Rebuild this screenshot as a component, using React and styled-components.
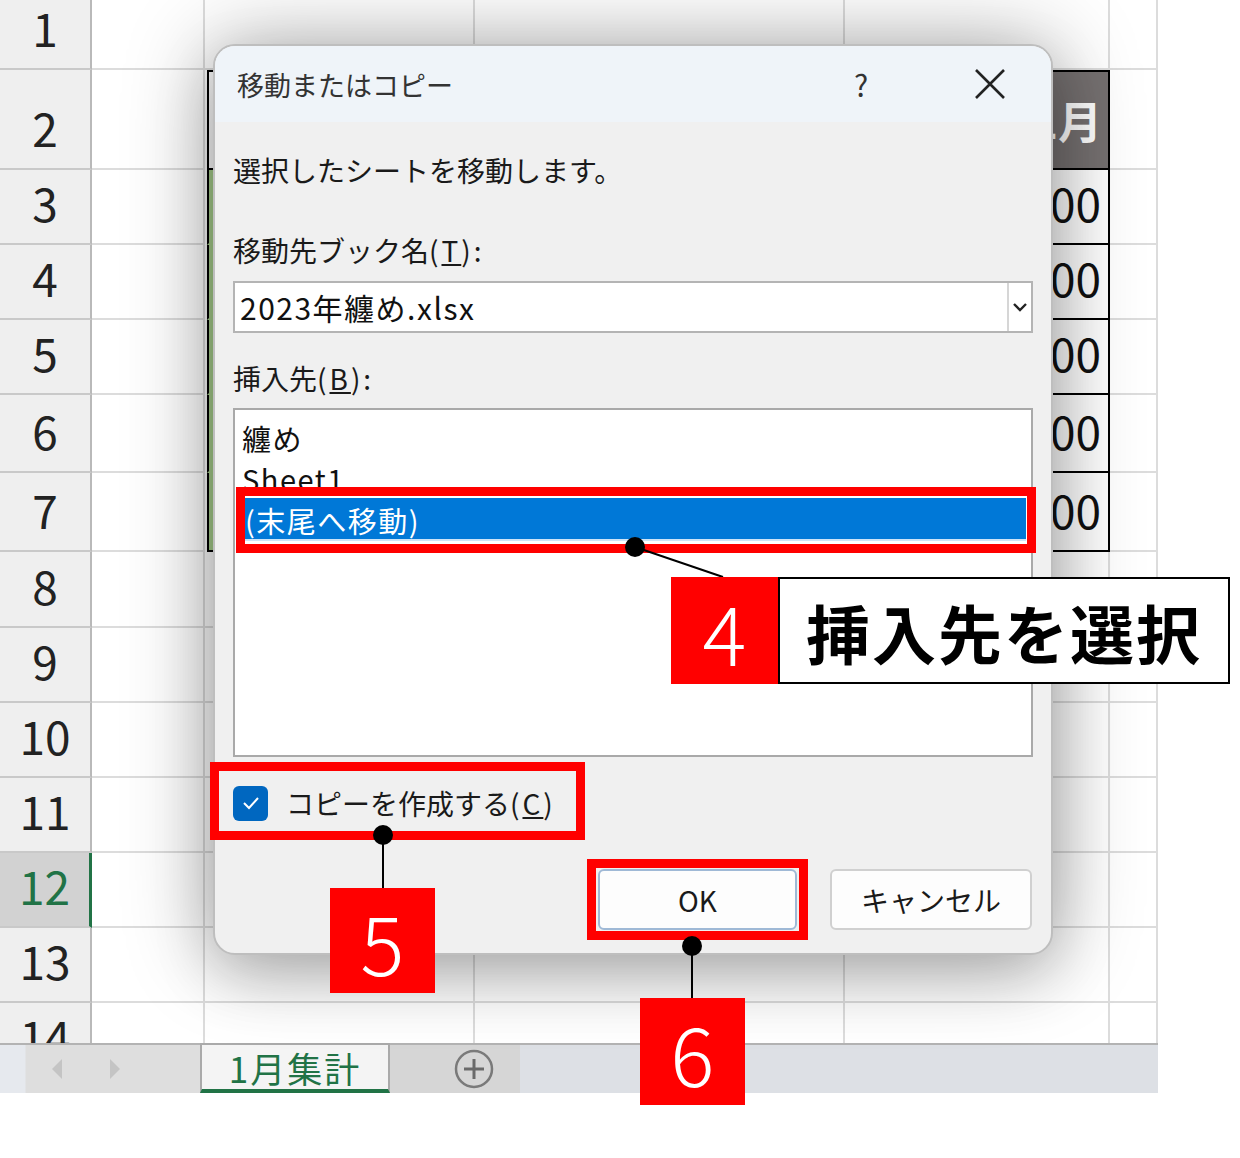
import React from 'react'
import styled, { createGlobalStyle } from 'styled-components'

const GlobalStyle = createGlobalStyle`
    html, body {
        margin:0;
        padding:0;
        background:#fff;
    }
    body {
        font-family:"Noto Sans CJK JP", "Noto Sans", sans-serif;
        color:#1a1a1a;
    }
    * {
        box-sizing:border-box;
    }
`

const FONT = `"Noto Sans CJK JP", "Noto Sans", sans-serif`

const Page = styled.div`
    position:relative;
    width:1240px;
    height:1158px;
    overflow:hidden;
    background:#fff;
`

const Workbook = styled.div`
    width:1158px;
    display:flex;
    flex-direction:column;
`

const Sheet = styled.div`
    height:1043px;
    overflow:hidden;
    display:grid;
    grid-template-columns:92px 113px 270px 370px 265px 48px;
    grid-template-rows:70px 100px 75px 75px 75px 78px 79px 76px 75px 75px 75px 75px 75px 75px;
    background:#fff;
`

const RowHead = styled.div`
    display:flex;
    align-items:flex-end;
    justify-content:center;
    padding-bottom:15px;
    font-family:${FONT};
    font-size:46px;
    line-height:1.1;
    background:${p => p.$active ? '#d2d2d2' : '#efefef'};
    color:${p => p.$active ? '#217346' : '#222'};
    border-right:${p => p.$active ? '3px solid #217346' : '2px solid #b9b9b9'};
    border-bottom:2px solid #c9c9c9;
`

const Cell = styled.div`
    border-right:2px solid #dcdcdc;
    border-bottom:2px solid #dcdcdc;
`

const HeadCell = styled.div`
    display:flex;
    align-items:center;
    justify-content:flex-end;
    padding-right:6px;
    background:#767171;
    color:#fff;
    font-family:${FONT};
    font-size:44px;
    font-weight:700;
    border-top:2px solid #000;
    border-right:2px solid #000;
    border-bottom:2px solid #000;
`

const TitleCell = styled.div`
    background:#fff;
    border-left:2px solid #000;
    border-top:2px solid #000;
    border-bottom:2px solid #000;
    margin-left:2px;
`

const BlankCell = styled.div`
    background:#fff;
    border-right:2px solid #000;
    border-bottom:2px solid #000;
`

const GreenCell = styled.div`
    background:#a9d08e;
    border-left:2px solid #000;
    margin-left:2px;
    border-bottom:2px solid ${p => p.$last ? '#000' : '#a9d08e'};
`

const NumCell = styled.div`
    display:flex;
    align-items:flex-end;
    justify-content:flex-end;
    padding:0 7px 15px 0;
    background:#fff;
    font-family:${FONT};
    font-size:46px;
    line-height:1.1;
    color:#111;
    border-right:2px solid #000;
    border-bottom:2px solid #000;
`

const TabBar = styled.div`
    height:50px;
    display:flex;
    background:#dde0e5;
    border-top:2px solid #b3b3b3;
`

const TabNav = styled.div`
    width:200px;
    display:flex;
    align-items:center;
    gap:44px;
    padding-left:50px;
    background:linear-gradient(90deg, #e6e9ee 0px, #e6e9ee 25px, #dedede 26px);
`

const Tab = styled.div`
    width:190px;
    display:flex;
    align-items:center;
    justify-content:center;
    margin-top:-2px;
    background:#f4f4f4;
    border-left:2px solid #aaa;
    border-right:2px solid #aaa;
    border-top:2px solid #aaa;
    border-bottom:4px solid #217346;
    color:#217346;
    font-family:${FONT};
    font-size:35px;
    letter-spacing:2px;
`

const AddSheet = styled.div`
    width:130px;
    display:flex;
    align-items:center;
    padding-left:63px;
    background:#d6d6d6;
`

const Dialog = styled.div`
    position:absolute;
    left:213px;
    top:44px;
    width:840px;
    height:911px;
    display:flex;
    flex-direction:column;
    background:#f0f0f0;
    border:2px solid #bebebe;
    border-radius:22px;
    box-shadow:0 0 90px rgba(0,0,0,0.32), 0 20px 60px rgba(0,0,0,0.18);
    overflow:hidden;
    font-family:${FONT};
`

const TitleBar = styled.div`
    height:76px;
    flex:none;
    display:flex;
    align-items:center;
    padding:0 31px 0 22px;
    background:#eff4f9;
`

const Title = styled.div`
    flex:1;
    font-size:27px;
    color:#333;
`

const Help = styled.div`
    width:40px;
    text-align:center;
    font-size:30px;
    color:#333;
`

const Close = styled.div`
    width:60px;
    margin-left:79px;
    display:flex;
    justify-content:center;
`

const Body = styled.div`
    flex:1;
    display:flex;
    flex-direction:column;
    padding:0 18px 0 18px;
`

const Text = styled.div`
    font-size:28px;
    line-height:40px;
    color:#1a1a1a;
    margin-top:${p => p.$gap}px;
`

const Key = styled.span`
    letter-spacing:3px;
`

const Combo = styled.div`
    margin-top:11px;
    height:52px;
    display:flex;
    background:#fff;
    border:2px solid #b4b4b4;
`

const ComboText = styled.div`
    flex:1;
    display:flex;
    align-items:center;
    padding-left:5px;
    font-size:30px;
    letter-spacing:1.5px;
    color:#111;
`

const ComboButton = styled.div`
    width:24px;
    display:flex;
    align-items:center;
    justify-content:center;
    border-left:2px solid #d6d6d6;
`

const List = styled.div`
    margin-top:10px;
    height:349px;
    display:flex;
    flex-direction:column;
    padding:8px 5px 0 5px;
    background:#fff;
    border:2px solid #a9a9a9;
`

const Item = styled.div`
    height:${p => p.$selected ? 43 : 40}px;
    display:flex;
    align-items:center;
    margin-left:${p => p.$selected ? 4 : 0}px;
    padding-left:${p => p.$selected ? 1 : 2}px;
    font-size:29px;
    letter-spacing:1.5px;
    color:${p => p.$selected ? '#fff' : '#111'};
    background:${p => p.$selected ? '#0078d7' : 'transparent'};
    box-shadow:${p => p.$selected ? 'inset 0 -2px 0 #cde4f8' : 'none'};
`

const CheckRow = styled.div`
    margin-top:28px;
    height:36px;
    display:flex;
    align-items:center;
    gap:18px;
    font-size:28px;
    color:#1a1a1a;
`

const CheckBox = styled.div`
    width:35px;
    height:35px;
    display:flex;
    align-items:center;
    justify-content:center;
    border-radius:6px;
    background:#0067c0;
`

const Buttons = styled.div`
    margin-top:48px;
    display:flex;
    justify-content:flex-end;
    gap:33px;
    padding-right:1px;
`

const Button = styled.div`
    width:${p => p.$w}px;
    height:61px;
    display:flex;
    align-items:center;
    justify-content:center;
    background:#fdfdfd;
    border:2px solid ${p => p.$primary ? '#9fb9d6' : '#d0d0d0'};
    border-radius:6px;
    font-size:28px;
    color:#1a1a1a;
`

const Mark = styled.div`
    position:absolute;
    left:${p => p.$x}px;
    top:${p => p.$y}px;
    width:${p => p.$w}px;
    height:${p => p.$h}px;
    border:9px solid #ff0000;
`

const Badge = styled.div`
    position:absolute;
    left:${p => p.$x}px;
    top:${p => p.$y}px;
    width:${p => p.$w}px;
    height:${p => p.$h}px;
    display:flex;
    align-items:center;
    justify-content:center;
    background:#ff0000;
    color:#fff;
    font-family:${FONT};
    font-size:82px;
    font-weight:300;
    line-height:1;
`

const Caption = styled.div`
    position:absolute;
    left:778px;
    top:577px;
    width:452px;
    height:107px;
    display:flex;
    align-items:center;
    justify-content:center;
    background:#fff;
    border:2px solid #000;
    font-family:${FONT};
    font-size:64px;
    font-weight:700;
    letter-spacing:2px;
    color:#000;
`

const Leaders = styled.svg`
    position:absolute;
    left:0;
    top:0;
    pointer-events:none;
`

const rows = [
    {n:1}, {n:2, kind:'head'}, {n:3, v:'120,000'}, {n:4, v:'150,000'},
    {n:5, v:'98,000'}, {n:6, v:'210,000'}, {n:7, v:'578,000'},
    {n:8}, {n:9}, {n:10}, {n:11}, {n:12, active:true}, {n:13}, {n:14},
]

function SheetRow({row}) {
    if (row.kind === 'head') {
        return (
            <>
                <RowHead>{row.n}</RowHead>
                <Cell />
                <TitleCell />
                <BlankCell />
                <HeadCell>1月</HeadCell>
                <Cell />
            </>
        )
    }
    if (row.v) {
        return (
            <>
                <RowHead>{row.n}</RowHead>
                <Cell />
                <GreenCell $last={row.n === 7} />
                <BlankCell />
                <NumCell>{row.v}</NumCell>
                <Cell />
            </>
        )
    }
    return (
        <>
            <RowHead $active={row.active}>{row.n}</RowHead>
            <Cell />
            <Cell />
            <Cell />
            <Cell />
            <Cell />
        </>
    )
}

export default function App() {
    return (
        <Page>
            <GlobalStyle />
            <Workbook>
                <Sheet>
                    {rows.map(r => <SheetRow key={r.n} row={r} />)}
                </Sheet>
                <TabBar>
                    <TabNav>
                        <svg width="14" height="24" viewBox="0 0 14 24"><path d="M12 2 L2 12 L12 22 Z" fill="#c4c4c4" /></svg>
                        <svg width="14" height="24" viewBox="0 0 14 24"><path d="M2 2 L12 12 L2 22 Z" fill="#c4c4c4" /></svg>
                    </TabNav>
                    <Tab>1月集計</Tab>
                    <AddSheet>
                        <svg width="42" height="42" viewBox="0 0 42 42">
                            <circle cx="21" cy="21" r="18" fill="none" stroke="#7a7a7a" strokeWidth="2.5" />
                            <path d="M21 11 V31 M11 21 H31" stroke="#6a6a6a" strokeWidth="3" />
                        </svg>
                    </AddSheet>
                </TabBar>
            </Workbook>

            <Dialog>
                <TitleBar>
                    <Title>移動またはコピー</Title>
                    <Help>?</Help>
                    <Close>
                        <svg width="32" height="32" viewBox="0 0 32 32">
                            <path d="M2 2 L30 30 M30 2 L2 30" stroke="#222" strokeWidth="2.6" />
                        </svg>
                    </Close>
                </TitleBar>
                <Body>
                    <Text $gap={28}>選択したシートを移動します。</Text>
                    <Text $gap={40}>移動先ブック名<Key>(<u>T</u>):</Key></Text>
                    <Combo>
                        <ComboText>2023年纏め.xlsx</ComboText>
                        <ComboButton>
                            <svg width="16" height="10" viewBox="0 0 16 10">
                                <path d="M2 2 L8 8 L14 2" fill="none" stroke="#222" strokeWidth="2.4" />
                            </svg>
                        </ComboButton>
                    </Combo>
                    <Text $gap={25}>挿入先<Key>(<u>B</u>):</Key></Text>
                    <List>
                        <Item>纏め</Item>
                        <Item>Sheet1</Item>
                        <Item $selected>(末尾へ移動)</Item>
                    </List>
                    <CheckRow>
                        <CheckBox>
                            <svg width="20" height="16" viewBox="0 0 20 16">
                                <path d="M3 8 L8 13 L17 3" fill="none" stroke="#fff" strokeWidth="2" />
                            </svg>
                        </CheckBox>
                        <span>コピーを作成する<Key>(<u>C</u>)</Key></span>
                    </CheckRow>
                    <Buttons>
                        <Button $w={199} $primary>OK</Button>
                        <Button $w={202}>キャンセル</Button>
                    </Buttons>
                </Body>
            </Dialog>

            <Mark $x={236} $y={487} $w={800} $h={66} />
            <Mark $x={210} $y={762} $w={375} $h={78} />
            <Mark $x={587} $y={859} $w={221} $h={81} />

            <Leaders width="1240" height="1158" viewBox="0 0 1240 1158">
                <line x1="635" y1="547" x2="723" y2="577" stroke="#000" strokeWidth="2" />
                <circle cx="635" cy="547" r="10" fill="#000" />
                <line x1="383" y1="835" x2="383" y2="888" stroke="#000" strokeWidth="2" />
                <circle cx="383" cy="835" r="10" fill="#000" />
                <line x1="692" y1="946" x2="692" y2="998" stroke="#000" strokeWidth="2" />
                <circle cx="692" cy="946" r="10" fill="#000" />
            </Leaders>

            <Badge $x={671} $y={577} $w={107} $h={107}>4</Badge>
            <Caption>挿入先を選択</Caption>
            <Badge $x={330} $y={888} $w={105} $h={105}>5</Badge>
            <Badge $x={640} $y={998} $w={105} $h={107}>6</Badge>
        </Page>
    )
}
